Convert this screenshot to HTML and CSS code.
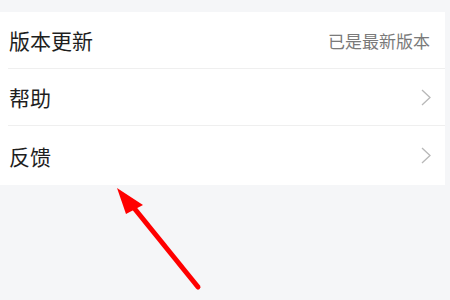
FILE: index.html
```html
<!doctype html>
<html lang="zh">
<head>
  <meta charset="utf-8">
  <title>设置</title>
  <link rel="stylesheet" href="styles.css">
</head>
<body>
  <div class="card">
    <div class="row">
      <span class="label">版本更新</span>
      <span class="value">已是最新版本</span>
    </div>
    <div class="row">
      <span class="label">帮助</span>
      <svg class="chevron" viewBox="0 0 10 17"><path d="M1 1 L9 8.5 L1 16" /></svg>
    </div>
    <div class="row">
      <span class="label">反馈</span>
      <svg class="chevron" viewBox="0 0 10 17"><path d="M1 1 L9 8.5 L1 16" /></svg>
    </div>
  </div>
  <svg class="pointer" viewBox="0 0 450 300">
    <line x1="198" y1="287" x2="130" y2="203" />
    <polygon points="117,188 143,205 126,214" />
  </svg>
</body>
</html>
```
FILE: styles.css
```css
html, body {
	margin: 0; padding: 0;
	background: #f5f6f8;
	font-family: "Noto Sans CJK SC", "Noto Sans", sans-serif;
	width: 450px; height: 300px;
	overflow: hidden;
}
.card {
	margin-top: 12px;
	width: 445px;
	background: #fff;
	padding-left: 8px;
	box-sizing: border-box;
}
.row {
	height: 57px;
	display: flex;
	align-items: center;
	justify-content: space-between;
	padding-right: 14px;
	border-bottom: 1px solid #efefef;
	box-sizing: border-box;
}
.row:last-child { border-bottom: none; height: 59px; }
.label {
	font-size: 21px;
	color: #1e1e1e;
	padding-left: 1px;
}
.value {
	font-size: 17px;
	color: #7a7a7a;
	margin-right: 1px;
}
.chevron {
	width: 10px; height: 17px;
	fill: none;
	stroke: #b8b8b8;
	stroke-width: 1.3;
}
.pointer {
	position: absolute;
	left: 0; top: 0;
	width: 450px; height: 300px;
}
.pointer line { stroke: #ff0000; stroke-width: 5; stroke-linecap: round; }
.pointer polygon { fill: #ff0000; }
```
